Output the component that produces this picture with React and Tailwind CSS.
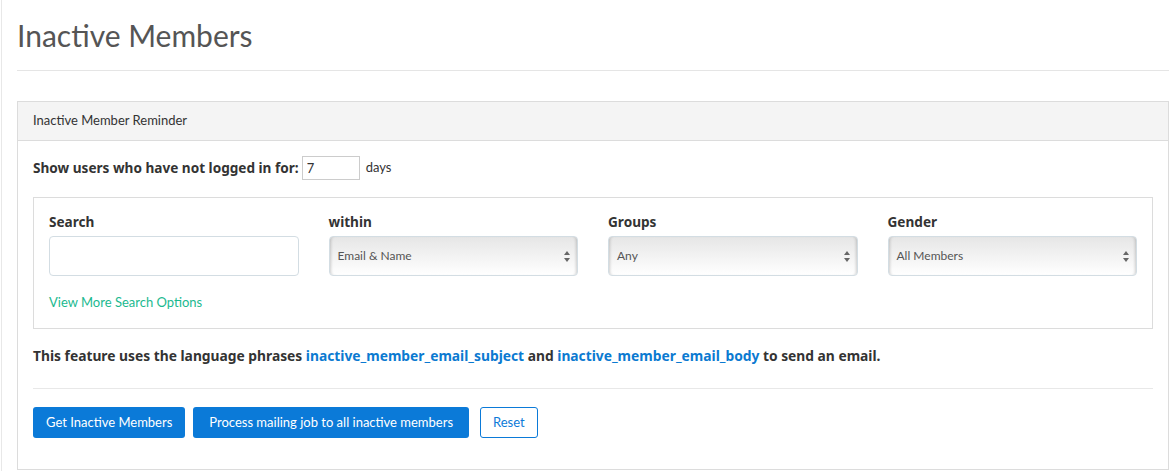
import React from "react";

const SelectBox = ({ value }) => {
    return (
        <div className="relative h-[40px] w-full rounded-[4px] border border-[#d3dde3] bg-gradient-to-b from-[#e6e6e6] to-white shadow-[inset_3px_0_3px_-2px_rgba(0,0,0,0.18),inset_-3px_0_3px_-2px_rgba(0,0,0,0.18)]">
            <span className="absolute left-[8px] top-[10px] text-[12px] text-[#555]">{value}</span>
            <svg className="absolute right-[7px] top-[14px]" width="6" height="11" viewBox="0 0 6 11">
                <path d="M3 0 L6 4 L0 4 Z" fill="#666" />
                <path d="M0 7 L6 7 L3 11 Z" fill="#666" />
            </svg>
        </div>
    )
}

// bold text in the original is much wider than Lato bold
const bold = { fontFamily: "'Noto Sans', 'Liberation Sans', sans-serif" };

const App = () => {
    return (
        <div className="min-h-[471px] w-[1173px] bg-white" style={{ fontFamily: "Lato, 'Liberation Sans', sans-serif" }}>
            <div className="ml-[1px] min-h-[471px] border-l border-[#e8e8e8] pl-[15px] pr-[4px]">
                <div className="pt-[16px]">
                    <h1 className="text-[30px] leading-[38px] text-[#555]">Inactive Members</h1>
                    <div className="mt-[16px] border-t border-[#e5e5e5]"></div>
                </div>

                <div className="mt-[30px] border border-[#dcdcdc]">
                    <div className="flex h-[39px] items-center border-b border-[#dcdcdc] bg-[#f4f4f4] px-[15px] text-[13px] text-[#333]">
                        Inactive Member Reminder
                    </div>

                    <div className="px-[15px] pb-[31px] pt-[15px]">
                        <div className="flex h-[24px] items-center text-[13px] text-[#333]">
                            <span className="text-[13.6px] font-bold" style={bold}>Show users who have not logged in for:</span>
                            <input
                                className="ml-[3px] h-[24px] w-[58px] border border-[#ccc] px-[4px] text-[13px] text-[#333] outline-none"
                                defaultValue="7"
                            />
                            <span className="ml-[6px]">days</span>
                        </div>

                        <div className="mt-[17px] border border-[#dcdcdc] px-[15px] pb-[17px] pt-[15px]">
                            <div className="grid grid-cols-4 gap-x-[30px]">
                                <div>
                                    <div className="mb-[5px] text-[13.6px] font-bold leading-[18px] text-[#333]" style={bold}>Search</div>
                                    <input className="h-[40px] w-full rounded-[4px] border border-[#d3dde3] px-[8px] outline-none" />
                                </div>
                                <div>
                                    <div className="mb-[5px] text-[13.6px] font-bold leading-[18px] text-[#333]" style={bold}>within</div>
                                    <SelectBox value="Email & Name" />
                                </div>
                                <div>
                                    <div className="mb-[5px] text-[13.6px] font-bold leading-[18px] text-[#333]" style={bold}>Groups</div>
                                    <SelectBox value="Any" />
                                </div>
                                <div>
                                    <div className="mb-[5px] text-[13.6px] font-bold leading-[18px] text-[#333]" style={bold}>Gender</div>
                                    <SelectBox value="All Members" />
                                </div>
                            </div>
                            <div className="mt-[17px] text-[13px] leading-[18px] text-[#1bb98f]">View More Search Options</div>
                        </div>

                        <p className="mt-[17px] text-[13.8px] font-bold leading-[20px] text-[#333]" style={bold}>
                            This feature uses the language phrases <a className="text-[#0b7ad1]">inactive_member_email_subject</a> and <a className="text-[#0b7ad1]">inactive_member_email_body</a> to send an email.
                        </p>

                        <div className="mt-[22px] border-t border-[#e8e8e8]"></div>

                        <div className="mt-[18px] flex gap-[8px]">
                            <button className="h-[31px] rounded-[3px] bg-[#0b7ad8] px-[13px] text-[13px] text-white">Get Inactive Members</button>
                            <button className="h-[31px] rounded-[3px] bg-[#0b7ad8] px-[16px] text-[13px] text-white">Process mailing job to all inactive members</button>
                            <button className="ml-[3px] h-[31px] rounded-[3px] border border-[#0b7ad8] bg-white px-[12px] text-[13px] text-[#0b7ad8]">Reset</button>
                        </div>
                    </div>
                </div>
            </div>
        </div>
    )
}

export default App;
